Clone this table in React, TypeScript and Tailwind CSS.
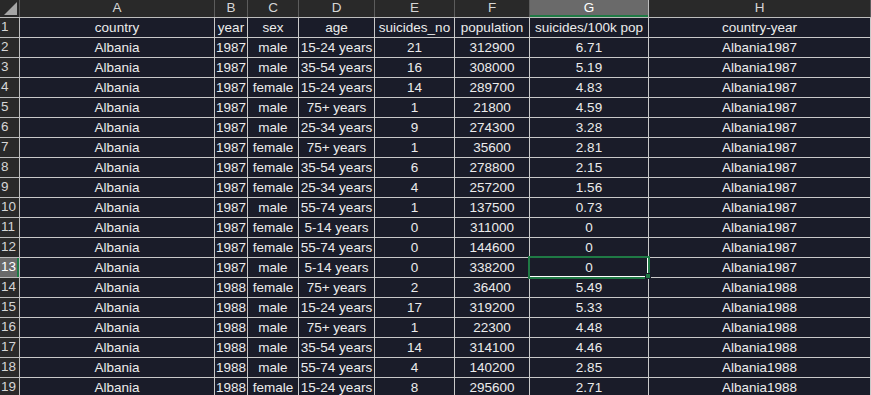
import React from 'react'

const columns = [
  { key: 'A', w: 'w-[195px]' },
  { key: 'B', w: 'w-[33px]' },
  { key: 'C', w: 'w-[51px]' },
  { key: 'D', w: 'w-[76px]' },
  { key: 'E', w: 'w-[80px]' },
  { key: 'F', w: 'w-[75px]' },
  { key: 'G', w: 'w-[119px]' },
  { key: 'H', w: 'w-[222px]' },
]

const rows: string[][] = [
  ['country', 'year', 'sex', 'age', 'suicides_no', 'population', 'suicides/100k pop', 'country-year'],
  ['Albania', '1987', 'male', '15-24 years', '21', '312900', '6.71', 'Albania1987'],
  ['Albania', '1987', 'male', '35-54 years', '16', '308000', '5.19', 'Albania1987'],
  ['Albania', '1987', 'female', '15-24 years', '14', '289700', '4.83', 'Albania1987'],
  ['Albania', '1987', 'male', '75+ years', '1', '21800', '4.59', 'Albania1987'],
  ['Albania', '1987', 'male', '25-34 years', '9', '274300', '3.28', 'Albania1987'],
  ['Albania', '1987', 'female', '75+ years', '1', '35600', '2.81', 'Albania1987'],
  ['Albania', '1987', 'female', '35-54 years', '6', '278800', '2.15', 'Albania1987'],
  ['Albania', '1987', 'female', '25-34 years', '4', '257200', '1.56', 'Albania1987'],
  ['Albania', '1987', 'male', '55-74 years', '1', '137500', '0.73', 'Albania1987'],
  ['Albania', '1987', 'female', '5-14 years', '0', '311000', '0', 'Albania1987'],
  ['Albania', '1987', 'female', '55-74 years', '0', '144600', '0', 'Albania1987'],
  ['Albania', '1987', 'male', '5-14 years', '0', '338200', '0', 'Albania1987'],
  ['Albania', '1988', 'female', '75+ years', '2', '36400', '5.49', 'Albania1988'],
  ['Albania', '1988', 'male', '15-24 years', '17', '319200', '5.33', 'Albania1988'],
  ['Albania', '1988', 'male', '75+ years', '1', '22300', '4.48', 'Albania1988'],
  ['Albania', '1988', 'male', '35-54 years', '14', '314100', '4.46', 'Albania1988'],
  ['Albania', '1988', 'male', '55-74 years', '4', '140200', '2.85', 'Albania1988'],
  ['Albania', '1988', 'female', '15-24 years', '8', '295600', '2.71', 'Albania1988'],
]

const selectedRow = 13
const selectedCol = 'G'

export default function App() {
  return (
    <div
      className="relative w-[871px] h-[395px] overflow-hidden bg-[#1a1c29] text-[13.5px] text-[#ececec]"
      style={{ fontFamily: '"Liberation Sans", Arial, sans-serif' }}
    >
      {/* column letters */}
      <div className="flex h-[18px] bg-[#292929] border-b border-[#bdbdbd]">
        <div className="w-[20px] shrink-0 border-r border-[#5c5c5c] flex items-end justify-end pr-[2px] pb-[2px]">
          <svg width="13" height="13" viewBox="0 0 13 13">
            <polygon points="13,0 13,13 0,13" fill="#a6a6a6" />
          </svg>
        </div>
        {columns.map((c) => (
          <div
            key={c.key}
            className={`${c.w} shrink-0 flex items-center justify-center border-r ${
              c.key === selectedCol
                ? 'bg-[#6a6a6a] border-[#bdbdbd] shadow-[inset_0_-2px_0_#1f7a45] text-white'
                : 'border-[#5c5c5c] text-[#d6d6d6]'
            }`}
          >
            {c.key}
          </div>
        ))}
      </div>

      {/* grid */}
      {rows.map((r, i) => {
        const n = i + 1
        const sel = n === selectedRow
        return (
          <div key={n} className="flex h-[20px]">
            <div
              className={`w-[20px] shrink-0 flex items-center pl-[1px] border-b border-r ${
                sel
                  ? 'bg-[#6a6a6a] border-[#bdbdbd] shadow-[inset_-2px_0_0_#1f7a45] text-white'
                  : 'bg-[#292929] border-[#bdbdbd] text-[#d6d6d6]'
              }`}
            >
              {n}
            </div>
            {r.map((v, j) => (
              <div
                key={j}
                className={`${columns[j].w} shrink-0 flex items-center justify-center whitespace-nowrap overflow-hidden border-b border-r border-[#c9c9c9] pt-[1px]`}
              >
                {v}
              </div>
            ))}
          </div>
        )
      })}

      {/* active cell */}
      <div className="absolute left-[528px] top-[256px] w-[122px] h-[23px] border-2 border-[#1f7a45] shadow-[inset_-1px_-1px_0_#ffffff]" />
      <div className="absolute left-[645px] top-[273px] w-[6px] h-[6px] bg-[#1f7a45] border border-[#1a1c29]" />
    </div>
  )
}
